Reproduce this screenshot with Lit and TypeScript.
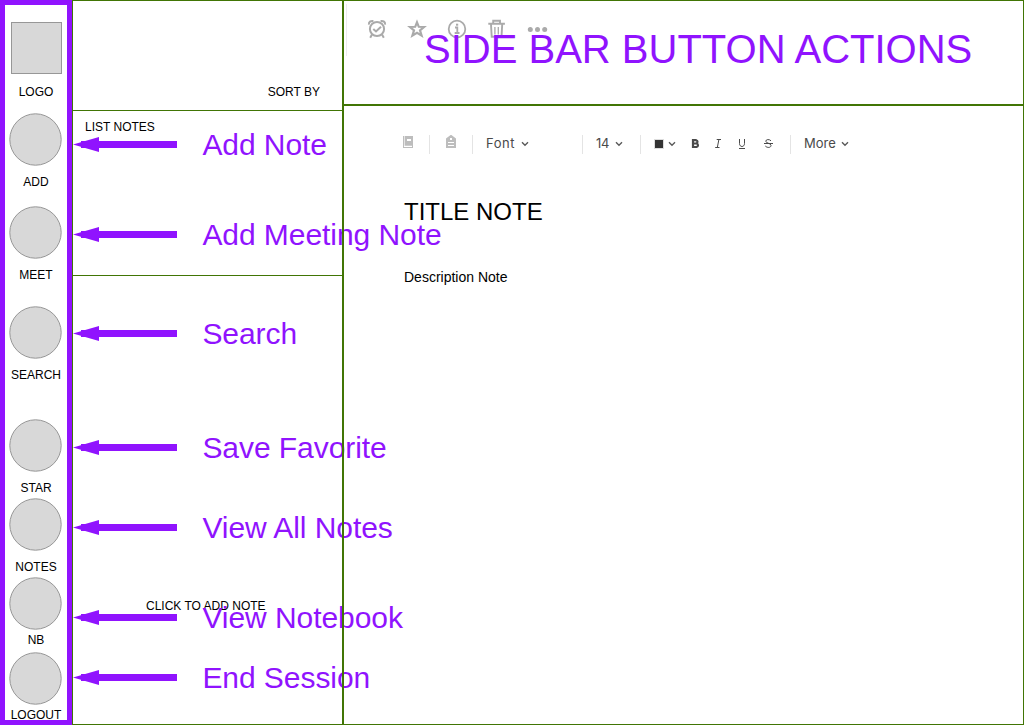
import { LitElement, html, css, svg } from "lit";
import { customElement } from "lit/decorators.js";

interface NavItem { label: string; shape: string; cls: string }
interface Callout { text: string; cls: string }

const NAV: NavItem[] = [
  { label: "LOGO", shape: "square", cls: "logo" },
  { label: "ADD", shape: "circle", cls: "add" },
  { label: "MEET", shape: "circle", cls: "meet" },
  { label: "SEARCH", shape: "circle", cls: "search" },
  { label: "STAR", shape: "circle", cls: "star" },
  { label: "NOTES", shape: "circle", cls: "notes" },
  { label: "NB", shape: "circle", cls: "nb" },
  { label: "LOGOUT", shape: "circle", cls: "logout" },
];

const CALLOUTS: Callout[] = [
  { text: "Add Note", cls: "c1" },
  { text: "Add Meeting Note", cls: "c2" },
  { text: "Search", cls: "c3" },
  { text: "Save Favorite", cls: "c4" },
  { text: "View All Notes", cls: "c5" },
  { text: "View Notebook", cls: "c6" },
  { text: "End Session", cls: "c7" },
];

const chevron = html`<svg class="chev" width="8" height="6" viewBox="0 0 8 6"><path d="M1 1.2 4 4.2 7 1.2" fill="none" stroke="#5a5a5a" stroke-width="1.4"/></svg>`;

@customElement("app-root")
export class AppRoot extends LitElement {
  static styles = css`
    :host {
      display: block;
      position: relative;
      width: 1024px;
      height: 725px;
      overflow: hidden;
      background: #fff;
      color: #000;
      font-family: "Liberation Sans", Arial, sans-serif;
      font-size: 12px;
      line-height: 14px;
    }
    * { box-sizing: border-box; }
    svg { display: block; flex: none; }
    .page { display: grid; grid-template-columns: 72px 270px 682px; grid-template-rows: 725px; height: 725px; }
    .side {
      border: 5px solid #9013fe;
      padding-top: 17px;
      display: flex;
      flex-direction: column;
      align-items: center;
    }
    .item { display: flex; flex-direction: column; align-items: center; flex: none; height: 76px; }
    .item svg { margin-bottom: 9px; overflow: visible; }
    .logo { height: 77px; }
    .logo svg { margin-bottom: 10px; }
    .add { margin-top: 14px; }
    .meet { margin-top: 17px; }
    .search { margin-top: 24px; }
    .star { margin-top: 37px; }
    .notes { margin-top: 3px; }
    .nb { margin-top: 3px; height: 70px; }
    .logout { margin-top: 5px; height: 68px; }
    .nb svg, .logout svg { margin-bottom: 3px; }
    .list {
      border: 1px solid #417505;
      border-right: 0;
      display: flex;
      flex-direction: column;
    }
    .sort { height: 110px; border-bottom: 1px solid #417505; padding: 84px 22px 0 0; text-align: right; }
    .first { height: 165px; border-bottom: 1px solid #417505; padding: 9px 0 0 12px; }
    .click { padding: 323px 0 0 73px; }
    .main { border: 1px solid #417505; border-left: 0; position: relative; }
    .main::before {
      content: "";
      position: absolute;
      z-index: 3;
      left: 0;
      top: 0;
      bottom: 0;
      width: 2px;
      background: #417505;
    }
    .bar { height: 105px; border-bottom: 2px solid #417505; padding: 3px 0 0 4px; }
    .tools { height: 52px; border-left: 1px solid #ececec; display: flex; align-items: flex-start; padding: 13px 0 0 18px; gap: 16px; }
    .format { display: flex; align-items: center; height: 20px; margin-top: 28px; padding-left: 61px; font: 13px/20px Inter, sans-serif; color: #4a4a4a; }
    .format > * { flex: none; }
    .format > span { margin-top: -2px; }
    .sep { width: 1px; height: 19px; background: #e4e4e4; }
    .book { margin: -4px 15px 0 0; }
    .tag { margin: -4px 15px 0 15px; }
    .font { width: 30px; margin-left: 13px; letter-spacing: .5px; }
    .chev { margin: -1px 0 0 4.5px; }
    .s2 { margin-left: 53.5px; }
    .size { width: 14px; margin-left: 13px; letter-spacing: -.3px; }
    .s3 { margin-left: 17.5px; }
    .swatch { width: 8px; height: 8px; background: #333; margin: -1px 0 0 14px; outline: 1px solid #ddd; }
    .marks { margin: -1px 0 0 13.5px; }
    .s4 { margin-left: 15px; }
    .more { width: 32px; margin-left: 13px; }
    .title { margin: 44px 0 0 62px; font-size: 24px; line-height: 28px; font-weight: 400; }
    .desc { margin: 43px 0 0 62px; font-size: 14px; line-height: 16px; }
    .head { position: absolute; left: 424px; top: 26px; font-size: 40px; line-height: 46px; color: #9013fe; white-space: nowrap; z-index: 2; }
    .call { position: absolute; left: 73px; display: flex; align-items: flex-start; gap: 25.4px; height: 34px; font-size: 30px; line-height: 34px; letter-spacing: -.06px; color: #9013fe; white-space: nowrap; z-index: 2; }
    .call svg { margin-top: 9px; }
    .c1 { top: 128px; }
    .c2 { top: 218px; }
    .c3 { top: 317px; }
    .c4 { top: 431px; }
    .c5 { top: 511px; }
    .c6 { top: 601px; }
    .c7 { top: 661px; }
  `;

  private shape(kind: string) {
    return html`<svg width="52" height="53" viewBox="10 113 52 53">
      ${kind === "square"
        ? svg`<rect x="11.5" y="113.5" width="50" height="51" fill="#d8d8d8" stroke="#979797"/>`
        : svg`<circle cx="35.5" cy="139.5" r="25.7" fill="#d8d8d8" stroke="#979797"/>`}
    </svg>`;
  }

  render() {
    return html`
      <div class="page">
        <nav class="side">
          ${NAV.map((n) => html`<div class="item ${n.cls}">${this.shape(n.shape)}<span>${n.label}</span></div>`)}
        </nav>
        <section class="list">
          <div class="sort">SORT BY</div>
          <div class="first">LIST NOTES</div>
          <div class="click">CLICK TO ADD NOTE</div>
        </section>
        <main class="main">
          <div class="bar">
            <div class="tools">
              <svg width="24" height="24" viewBox="365 17 24 24" fill="none" stroke="#aaa" stroke-width="2">
                <circle cx="377" cy="29" r="7.1"/>
                <path d="M373.3 29 376 31.5 381 26.7M372 34.5 370.2 37.8M382 34.5 383.8 37.8"/>
                <path d="M368.9 24.6C368.7 21.7 370.5 20.7 373.4 21M385.1 24.6C385.3 21.7 383.5 20.7 380.6 21"/>
              </svg>
              <svg width="24" height="24" viewBox="405 17 24 24" fill="none" stroke="#aaa" stroke-width="2.2">
                <path d="M417 22.3 418.8 26.8 424 27 420 30.3 421.6 35.6 417 32.8 412.4 35.6 414 30.3 410 27 415.2 26.8Z"/>
              </svg>
              <svg width="24" height="24" viewBox="445 17 24 24" fill="none" stroke="#aaa">
                <circle cx="457" cy="29" r="8.3" stroke-width="1.8"/>
                <path d="M455 27.5H457.3V33M454.7 33H459.5" stroke-width="1.8"/>
                <path d="M456 24.7H458.2" stroke-width="2"/>
              </svg>
              <svg width="24" height="24" viewBox="485 17 24 24" fill="none" stroke="#aaa" stroke-width="1.9">
                <path d="M488.3 23.7H504.9M493.2 23V20.8H500V23M491 24.5 491.7 36.8H501.5L502.2 24.5"/>
                <path d="M494.9 27V34.5M498.3 27V34.5" stroke-width="1.3"/>
              </svg>
              <svg width="26" height="24" viewBox="525 17 26 24" fill="#aaa">
                <circle cx="530.3" cy="29.5" r="2.5"/><circle cx="537.5" cy="29.5" r="2.5"/><circle cx="544.7" cy="29.5" r="2.5"/>
              </svg>
            </div>
          </div>
          <div class="format">
            <svg class="book" width="11" height="12" viewBox="403 136 11 12">
              <path d="M403 136h1v11h8v-1.3h1V148h-10zM404.6 136h8.4v9.7h-8.4zM407 139v2h4v-2z" fill="#bdbdbd" fill-rule="evenodd"/>
            </svg>
            <i class="sep"></i>
            <svg class="tag" width="12" height="14" viewBox="445 135 12 14">
              <path d="M446 138.5 451 134.7 456 138.5V148H446ZM450 138v2h2v-2zM448 142v1h6v-1zM448 145v1h6v-1z" fill="#bdbdbd" fill-rule="evenodd"/>
            </svg>
            <i class="sep"></i>
            <span class="font">Font</span>${chevron}
            <i class="sep s2"></i>
            <span class="size">14</span>${chevron}
            <i class="sep s3"></i>
            <i class="swatch"></i>${chevron}
            <svg class="marks" width="86" height="14" viewBox="689 137 86 14" fill="none" stroke="#4a4a4a">
              <path d="M693 140.2H696.2A1.7 1.7 0 0 1 696.2 143.5H693ZM693 143.5H696.6A1.8 1.8 0 0 1 696.6 147H693Z" stroke-width="2.2"/>
              <path d="M716.7 139.5H721M715.2 147.5H719.5M718.9 139.5 717.3 147.5"/>
              <path d="M739.5 139V143.5C739.5 147.5 744.5 147.5 744.5 143.5V139M739 148.5H745"/>
              <path d="M771 140.8C769.5 139 765.8 139.2 765.8 141.2C765.8 143.5 771 143 771 145.4C771 148 767 148 765.3 146M764 143.5H773"/>
            </svg>
            <i class="sep s4"></i>
            <span class="more">More</span>${chevron}
          </div>
          <h1 class="title">TITLE NOTE</h1>
          <div class="desc">Description Note</div>
        </main>
      </div>
      <div class="head">SIDE BAR BUTTON ACTIONS</div>
      ${CALLOUTS.map((c) => html`<div class="call ${c.cls}">
        <svg width="104" height="15" viewBox="0 0 104 15" fill="#9013fe"><path d="M0 7.5 26 0V4H104V11H26V15Z"/><path d="M8 4H26V11H8Z"/></svg>
        <span>${c.text}</span>
      </div>`)}
    `;
  }
}
